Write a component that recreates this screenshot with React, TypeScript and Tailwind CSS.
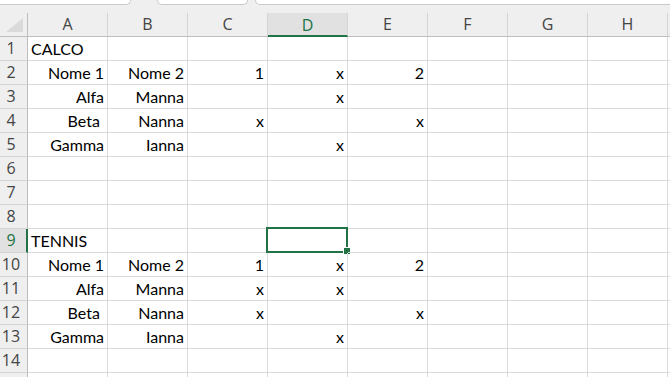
import React from 'react';

type Cell = { text: string; align?: 'left' | 'right' };

const columns = ['A', 'B', 'C', 'D', 'E', 'F', 'G', 'H', 'I'];

const R = (text: string): Cell => ({ text, align: 'right' });
const L = (text: string): Cell => ({ text, align: 'left' });

// row number -> column letter -> cell
const data: Record<number, Record<string, Cell>> = {
    1: { A: L('CALCO') },
    2: { A: R('Nome 1'), B: R('Nome 2'), C: R('1'), D: R('x'), E: R('2') },
    3: { A: R('Alfa'), B: R('Manna'), D: R('x') },
    4: { A: R('Beta '), B: R('Nanna'), C: R('x'), E: R('x') },
    5: { A: R('Gamma'), B: R('Ianna'), D: R('x') },
    9: { A: L('TENNIS') },
    10: { A: R('Nome 1'), B: R('Nome 2'), C: R('1'), D: R('x'), E: R('2') },
    11: { A: R('Alfa'), B: R('Manna'), C: R('x'), D: R('x') },
    12: { A: R('Beta '), B: R('Nanna'), C: R('x'), E: R('x') },
    13: { A: R('Gamma'), B: R('Ianna'), D: R('x') },
};

const rows = Array.from({ length: 15 }, (_, i) => i + 1);

const selectedCol = 'D';
const selectedRow = 9;

// last column and last row are only partly in view: their labels fall outside
const visibleLabel = (c: string) => (c === 'I' ? '' : c);
const visibleRow = (r: number) => (r === 15 ? '' : r);

export default function App() {
    return (
        <div className="w-[670px] h-[377px] overflow-hidden bg-white flex flex-col">
            {/* Tab strip */}
            <div className="h-[13px] shrink-0 bg-[#efefef] flex items-start">
                <div className="ml-[-10px] w-[141px] h-[5px] bg-white border-x border-b border-[#c9c9c9] rounded-b-[6px]"></div>
                <div className="ml-[26px] w-[91px] h-[5px] bg-white border-x border-b border-[#c9c9c9] rounded-b-[6px]"></div>
                <div className="ml-[7px] flex-1 mr-[-10px] h-[5px] bg-white border-x border-b border-[#c9c9c9] rounded-b-[6px]"></div>
            </div>

            {/* Column headers */}
            <div className="flex h-[24px] shrink-0 bg-[#efefef] font-['Open_Sans',sans-serif] text-[16px] text-[#444444]">
                <div className="w-[28px] shrink-0 h-full border-r border-b border-[#bdbdbd] flex items-end justify-end">
                    <svg width="20" height="16" viewBox="0 0 20 16" className="mb-[2px] mr-[2px]">
                        <polygon points="18,0 18,14 1,14" fill="#dadada" />
                    </svg>
                </div>
                {columns.map((c) => (
                    <div
                        key={c}
                        className={
                            c === selectedCol
                                ? 'w-[80px] shrink-0 h-full border-r border-r-[#d4d4d4] border-b-2 border-b-[#217346] bg-[#e1e1e1] text-[#217346] flex items-center justify-center leading-[22px] pt-[1px]'
                                : 'w-[80px] shrink-0 h-full border-r border-r-[#d4d4d4] border-b border-b-[#bdbdbd] flex items-center justify-center leading-[23px]'
                        }
                    >
                        {visibleLabel(c)}
                    </div>
                ))}
            </div>

            {/* Rows */}
            {rows.map((r) => (
                <div key={r} className="flex h-[24px] shrink-0">
                    <div
                        className={
                            r === selectedRow
                                ? 'w-[28px] shrink-0 h-full bg-[#e1e1e1] border-r-2 border-r-[#217346] border-b border-b-[#d4d4d4] text-[#217346] font-["Open_Sans",sans-serif] text-[16px] leading-[23px] text-center pr-[4px]'
                                : 'w-[28px] shrink-0 h-full bg-[#efefef] border-r border-r-[#bdbdbd] border-b border-b-[#d4d4d4] text-[#444444] font-["Open_Sans",sans-serif] text-[16px] leading-[23px] text-center pr-[5px]'
                        }
                    >
                        {visibleRow(r)}
                    </div>
                    {columns.map((c) => {
                        const cell = data[r]?.[c];
                        const selected = r === selectedRow && c === selectedCol;
                        return (
                            <div
                                key={c}
                                className={
                                    cell?.align === 'right'
                                        ? 'relative w-[80px] shrink-0 h-full border-r border-b border-[#dadada] font-["Lato",sans-serif] text-[16px] leading-[23px] text-black whitespace-pre text-right pr-[3px]'
                                        : 'relative w-[80px] shrink-0 h-full border-r border-b border-[#dadada] font-["Lato",sans-serif] text-[16px] leading-[23px] text-black whitespace-pre pl-[3px]'
                                }
                            >
                                {cell?.text}
                                {selected && (
                                    <>
                                        <div className="absolute top-[-2px] left-[-2px] w-[82px] h-[26px] border-2 border-[#217346]"></div>
                                        <div className="absolute right-[-3px] bottom-[-2px] w-[6px] h-[6px] bg-[#217346] outline outline-1 outline-white"></div>
                                    </>
                                )}
                            </div>
                        );
                    })}
                </div>
            ))}
        </div>
    );
}
